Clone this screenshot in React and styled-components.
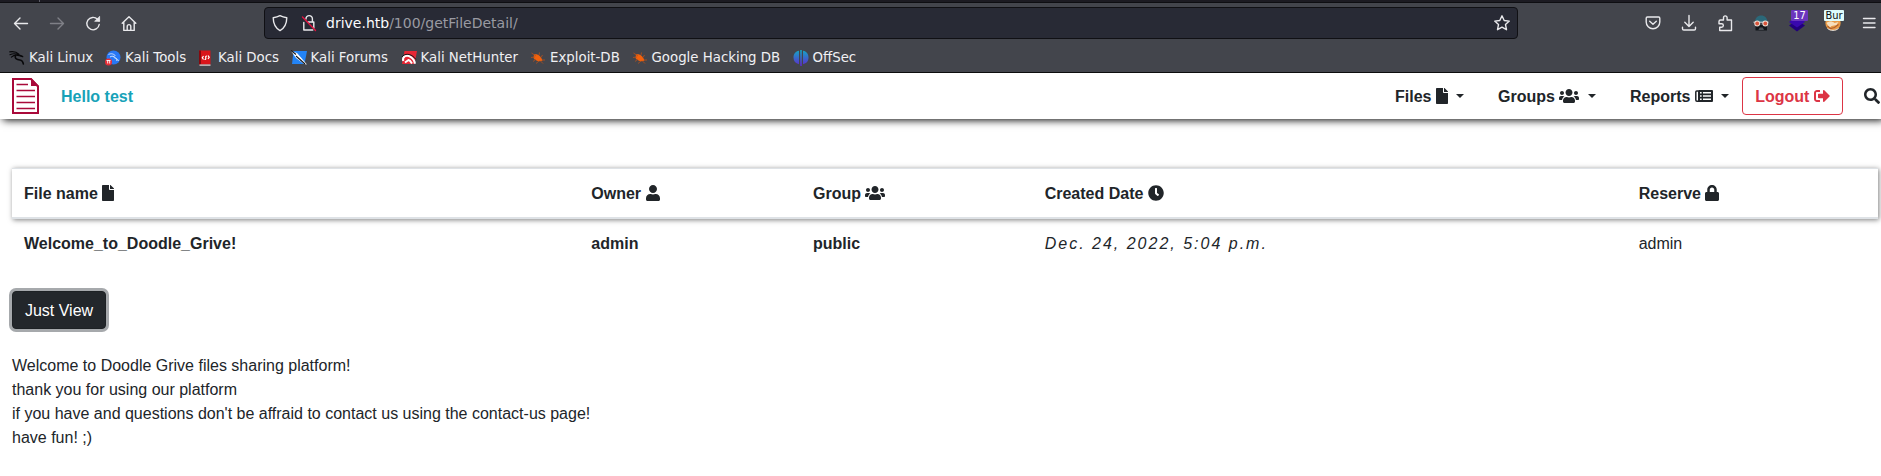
import React from 'react';
import styled, { createGlobalStyle } from 'styled-components';
import { FaFile, FaUsers, FaUser, FaClock, FaLock, FaSearch, FaSignOutAlt } from 'react-icons/fa';

const GlobalStyle = createGlobalStyle`
  *, *::before, *::after { box-sizing: border-box; }
  body {
    margin: 0;
    background: #fff;
    color: #212529;
    font: 400 16px/24px "Liberation Sans", Arial, sans-serif;
    overflow: hidden;
  }
  svg { display: block; flex: none; }
`;

const Page = styled.div`
  height: 476px;
  display: flex;
  flex-direction: column;
  overflow: hidden;
`;

/* ---------- browser chrome ---------- */
const Chrome = styled.header`
  position: relative;
  z-index: 1;
  flex: none;
  height: 73px;
  background: #43454c;
  color: #f0f0f3;
  border-bottom: 1px solid #0c0c0d;
  font-family: "DejaVu Sans", sans-serif;
`;
const TabStrip = styled.div`
  height: 3px;
  background: #1c1b22;
  border-bottom: 1px solid #0e0e12;
  padding-left: 39px;
`;
const TabEdge = styled.div`
  width: 1px;
  height: 2px;
  background: #5b5b66;
`;
const Toolbar = styled.div`
  height: 40px;
  display: flex;
  align-items: center;
`;
const NavButtons = styled.div`
  width: 264px;
  padding-left: 12px;
  display: flex;
  gap: 18px;
`;
const Stroke = styled.svg`
  width: 18px;
  height: 18px;
  fill: none;
  stroke: ${p => p.$color || '#e9e9ec'};
  stroke-width: 1.4;
  stroke-linecap: round;
  stroke-linejoin: round;
`;
const UrlBar = styled.div`
  width: 1254px;
  height: 32px;
  display: flex;
  align-items: center;
  padding: 0 6px;
  border: 1px solid #101014;
  border-radius: 4px;
  background: #282a35;
`;
const UrlIcons = styled.div`
  display: flex;
  gap: 10px;
`;
const Url = styled.div`
  flex: 1;
  padding-left: 9px;
  font-size: 14px;
  line-height: 20px;
  color: #9a9aa2;
`;
const Host = styled.span`
  color: #fbfbfe;
`;
const Extensions = styled.div`
  flex: 1;
  display: flex;
  align-items: center;
  gap: 18px;
  padding-left: 126px;
`;
const Extension = styled.div`
  position: relative;
  width: 18px;
  height: 18px;
`;
const Badge = styled.span`
  position: absolute;
  left: ${p => p.$left}px;
  top: -4px;
  width: ${p => p.$w}px;
  height: 11px;
  border-radius: 1px;
  background: ${p => p.$bg};
  color: ${p => p.$fg};
  font-family: "DejaVu Sans Condensed", "DejaVu Sans", sans-serif;
  font-stretch: condensed;
  font-size: 11px;
  line-height: 11px;
  text-align: center;
`;
const Bookmarks = styled.div`
  height: 29px;
  display: flex;
  align-items: center;
  padding: 1px 0 0 9px;
  font-size: 13.33px;
  line-height: 16px;
`;
const Bookmark = styled.div`
  width: ${p => p.$w}px;
  display: flex;
  align-items: center;
  gap: 4px;
  white-space: nowrap;
`;

/* ---------- site ---------- */
const Navbar = styled.nav`
  position: relative;
  flex: none;
  height: 46px;
  display: flex;
  align-items: center;
  padding-left: 12px;
  font-weight: 700;
  box-shadow: 3px 1px 8px #000;
  background: #fff;
`;
const Label = styled.span`
  padding-top: 2px;
`;
const Greeting = styled(Label)`
  flex: 1;
  padding-left: 22px;
  color: #17a2b8;
`;
const NavItem = styled.div`
  width: ${p => p.$w}px;
  display: flex;
  align-items: center;
  gap: 4.45px;
`;
const Caret = styled.i`
  border: 4.8px solid transparent;
  border-top-color: #212529;
  border-bottom: 0;
  margin-left: 4px;
`;
const Glyph = styled.span`
  display: inline-flex;
  svg { height: 16px; width: ${p => p.$w}px; }
`;
const Logout = styled.button`
  width: 101px;
  height: 38px;
  display: flex;
  align-items: center;
  justify-content: center;
  gap: 4.45px;
  padding: 0;
  border: 1px solid #dc3545;
  border-radius: 4px;
  background: #fff;
  color: #dc3545;
  font: inherit;
`;
const Search = styled.div`
  width: 38px;
  display: flex;
  padding-left: 21px;
`;

const Main = styled.main`
  padding: 49px 0 0 12px;
`;
const Row = styled.div`
  width: 1866px;
  display: grid;
  grid-template-columns: 567.3px 221.7px 231.7px 594px 1fr;
  padding-left: 12px;
  align-items: center;
`;
const HeadRow = styled(Row)`
  height: 51px;
  border-top: 1px solid #dee2e6;
  border-bottom: 2px solid #dee2e6;
  font-weight: 700;
  box-shadow: 1px 1px 5px rgba(0, 0, 0, .5);
`;
const BodyRow = styled(Row)`
  height: 50px;
`;
const HeadCell = styled.div`
  display: flex;
  align-items: center;
  gap: 4.45px;
`;
const DateText = styled.em`
  letter-spacing: 2px;
`;
const ViewButton = styled.button`
  display: block;
  width: 94px;
  height: 38px;
  margin: 22px 0 25px;
  padding: 2px 0 0;
  border: 1px solid #1d2124;
  border-radius: 4px;
  background: #23272b;
  color: #fff;
  font: inherit;
  box-shadow: 0 0 0 3px #a6a9ac;
`;
const Message = styled.div`
  white-space: pre-line;
`;

const BackIcon = () => <Stroke viewBox="0 0 18 18"><path d="M15.500 9.500H2.500M8 4 2.500 9.500 8 15" /></Stroke>;
const ForwardIcon = () => <Stroke $color="#7f8087" viewBox="0 0 18 18"><path d="M2.500 9.500h13M10 4 15.500 9.500 10 15" /></Stroke>;
const ReloadIcon = () => <Stroke viewBox="0 0 18 18"><path d="M15.200 10.500a6.200 6.200 0 1 1-1.700-5.200l1.600 1.700" /><path d="M15.600 2.700v4.600h-4.600z" fill="#e9e9ec" strokeWidth=".8" /></Stroke>;
const HomeIcon = () => <Stroke viewBox="0 0 18 18"><path d="m2.200 9.300 6.800-6.500 6.800 6.500M3.800 8v8.400h10.400V8M7.200 16.400v-4a1.800 1.800 0 0 1 3.600 0v4" /></Stroke>;
const ShieldIcon = () => <Stroke viewBox="0 0 18 18"><path d="M9 1.700c2 1.100 4 1.700 6.800 2-.1 5.600-1.600 10-6.800 12.900C3.800 13.700 2.300 9.300 2.200 3.700 5 3.400 7 2.800 9 1.700z" /></Stroke>;
const InsecureIcon = () => <Stroke viewBox="0 0 18 18"><path d="M7 5V4.800a3.200 3.200 0 0 1 6.400 0v3.200h1.400v6M4.800 8.500v7.500h9" /><path d="M9 8h4" /><path d="m3.500 3 13 13.500" stroke="#e2133f" /></Stroke>;
const StarIcon = () => <Stroke viewBox="0 0 18 18"><path d="m9 1.800 2.200 4.700 5.100.6-3.800 3.500 1 5.100L9 13.200l-4.500 2.500 1-5.100L1.700 7.100l5.100-.6z" /></Stroke>;
const PocketIcon = () => <Stroke viewBox="0 0 18 18"><path d="M3.400 3h11.200c.8 0 1.200.5 1.200 1.200V8a6.800 6.800 0 0 1-13.600 0V4.200C2.200 3.500 2.600 3 3.400 3zM5.700 7.300 9 10.300l3.300-3" /></Stroke>;
const DownloadIcon = () => <Stroke viewBox="0 0 18 18"><path d="M9 1.500v11M4.800 8.300 9 12.500l4.200-4.200M2.500 13.200v1.500c0 .8.500 1.300 1.300 1.300h10.400c.8 0 1.300-.5 1.300-1.300v-1.500" /></Stroke>;
const PuzzleIcon = () => <Stroke viewBox="0 0 18 18"><path d="M7.500 6V3.700a1.800 1.800 0 0 1 3.600 0V6h4.400v10.500H3.700v-3.200h1.900a1.700 1.700 0 0 0 0-3.500H3V7.500c0-1 .5-1.500 1.500-1.500z" /></Stroke>;
const MenuIcon = () => <Stroke viewBox="0 0 18 18"><path d="M3.500 4.500h11.500M3.500 9h11.500M3.500 13.500h11.500" /></Stroke>;

const GogglesIcon = () => (
  <svg width="18" height="18" viewBox="0 0 18 18">
    <path d="M3 8c0-4 2.500-6.500 6.200-6.500S15.300 4 15.300 8z" fill="#2b6879" />
    <path d="M3.500 11h11.500v5.500h-11.500z" fill="#111519" />
    <path d="M1.500 8.200h15" stroke="#ddd" strokeWidth="1" />
    <circle cx="5.200" cy="9.500" r="2.900" fill="#e8ded6" /><circle cx="13.300" cy="9.500" r="2.900" fill="#e8ded6" />
    <circle cx="5.200" cy="9.500" r="1.900" fill="#d9543a" /><circle cx="13.300" cy="9.500" r="1.900" fill="#d9543a" />
    <path d="M7.700 13.500h3l1.300 2.500h-5.600z" fill="#4a5057" />
  </svg>
);
const LayersIcon = () => (
  <svg width="18" height="18" viewBox="0 0 18 18">
    <path d="M1 11.500 9 6l8 5.500-8 6z" fill="#22007c" /><path d="M1 8 9 2l8 6-8 5.500z" fill="#3908ae" />
  </svg>
);
const FoxIcon = () => (
  <svg width="18" height="18" viewBox="0 0 18 18">
    <circle cx="9" cy="9" r="7.700" fill="#e99a45" />
    <path d="M2.500 9c2-2 6-2 8 0l4-1-2 3-5 1-2 2z" fill="#f6dfbd" />
    <path d="m3.500 12 3 2.500 4-1 4-3" stroke="#b0602a" strokeWidth="1.200" fill="none" />
    <path d="M3.500 14.500c3 2.500 8 2.500 11 0" stroke="#d8dce0" fill="none" />
  </svg>
);

const DragonIcon = () => (
  <svg width="16" height="16" viewBox="0 0 17 16" fill="none" stroke="#08080a" strokeLinecap="round">
    <path d="M.8 1.500C5 .8 8 1.500 10.500 4M1 4.500c3-1.500 6-1.300 9-.2M2.500 7C5 4.800 8 4.400 11 5.500l3 .7" strokeWidth="1.200" />
    <path d="M7 5c-1.500 4 2 4.700 4.500 5 2.500.5 3.500 2 3.800 4.500M11 5l3.500 1.500" strokeWidth="1.600" />
  </svg>
);
const ToolsIcon = () => (
  <svg width="16" height="16" viewBox="0 0 16 16">
    <circle cx="8.500" cy="7.500" r="7" fill="#2878f5" />
    <path d="M3.500 4.500c3-1.500 5.500-.5 7 1.500M5 7c3-2 6 0 7 4M8 6c1 3 4 1 5.500 5" fill="none" stroke="#cfe2ff" />
    <circle cx="3.500" cy="12" r="3.500" fill="#e72c36" />
    <path d="M1.500 10.500h4M2.700 10.500v3M4.700 10.500v3" stroke="#fff" strokeWidth=".9" />
  </svg>
);
const DocsIcon = () => (
  <svg width="16" height="16" viewBox="0 0 16 16">
    <path d="M1 .5h11.500v14H1z" fill="#d9141b" /><path d="M1 .5h2v14H1z" fill="#85090e" /><path d="M1.500 14.500h11v1.200h-11z" fill="#e5dada" />
    <path d="m5.500 6-1.200 1.700L5.500 9.500M10 5.500l1.200 1.800L10 9M9 6C6 6 9.500 9.500 6.500 9.500" stroke="#fff" strokeWidth="1.200" fill="none" />
  </svg>
);
const ForumsIcon = () => (
  <svg width="16" height="16" viewBox="0 0 16 16">
    <path d="M2.500 1H16l-2.500 13H1z" fill="#2384f6" /><path d="m0 1 6 2 10 11.500-3-.5L5 8z" fill="#fff" /><path d="m0 .5 5 4M5 6l9 8" stroke="#15171c" strokeWidth="1.100" />
  </svg>
);
const HunterIcon = () => (
  <svg width="16" height="16" viewBox="0 0 16 16">
    <path d="M3.500 1H16l-2.500 13H1z" fill="#e72735" />
    <path d="M2.200 11C1 6 6 4.500 9.500 6.800c2.800 1.800 4.300 4 4.300 7M4 12.500l3.500-2.500c2 .5 2.500 2 3.500 3.500" stroke="#fff" strokeWidth="2" fill="none" />
    <path d="M1 7C3 3.500 10 2.500 15 9.500" stroke="#15171c" strokeWidth="1" fill="none" />
  </svg>
);
const BugIcon = () => (
  <svg width="16" height="16" viewBox="0 0 16 16">
    <path d="M4 4.500c4-1 7 2 8.500 6-3 1.500-7.500.5-9-2.500z" fill="#f2610c" />
    <path d="M1.500 3 6 6M1 7.500 5 7M3 11.500l3-2.500M6 13.500l3-2.500M9.500 2.500 9 5M12.500 5 11 7.500M15 10h-3M13 13.500l-3-3" stroke="#b6511b" strokeWidth=".8" />
  </svg>
);
const OffSecIcon = () => (
  <svg width="16" height="16" viewBox="0 0 16 16">
    <defs><linearGradient id="offsec" x1="0" y1="0" x2="0" y2="1"><stop stopColor="#13a9c4" /><stop offset="1" stopColor="#5f27cf" /></linearGradient></defs>
    <path d="M6 .7v13.500C2.500 13.500.5 11 .5 7.500S2.500 1.300 6 .7zM10 .7v13.500c3.500-.7 5.500-3.200 5.500-6.700S13.500 1.300 10 .7zM7.200 0h1.600v16H7.200z" fill="url(#offsec)" />
  </svg>
);
const ReportIcon = () => (
  <svg viewBox="0 0 18 16" fill="none" stroke="#212529" strokeLinejoin="round">
    <path d="M3.200 3H1.800c-.6 0-1 .4-1 1v8c0 .8.500 1.200 1.200 1.200h2" strokeWidth="1.500" />
    <path d="M4 3h13v10H4z" strokeWidth="2" />
    <path d="M5 6.300h11.500M5 9.700h11.500" strokeWidth="1.700" />
    <path d="M7.300 3v10" strokeWidth="1.300" />
  </svg>
);
const SiteLogo = () => (
  <svg width="27" height="36" viewBox="0 0 27 36">
    <path d="M1 1H19l7 7.500V35H1z" fill="#fff" stroke="#a90a3a" strokeWidth="2" />
    <path d="M19 0v8h8z" fill="#a90a3a" />
    <path d="M4.500 6.500H16M4.500 12.500h18.500M4.500 18.500h18.500M4.500 24.500h18.500M4.500 30.500h18.500" stroke="#a90a3a" strokeWidth="1.700" />
  </svg>
);

const bookmarks = [
  ['Kali Linux', DragonIcon, 96],
  ['Kali Tools', ToolsIcon, 93],
  ['Kali Docs', DocsIcon, 92.5],
  ['Kali Forums', ForumsIcon, 110],
  ['Kali NetHunter', HunterIcon, 129.5],
  ['Exploit-DB', BugIcon, 101.5],
  ['Google Hacking DB', BugIcon, 161],
  ['OffSec', OffSecIcon, 80],
];

export default function App() {
  return (
    <Page>
      <GlobalStyle />
      <Chrome>
        <TabStrip><TabEdge /></TabStrip>
        <Toolbar>
          <NavButtons><BackIcon /><ForwardIcon /><ReloadIcon /><HomeIcon /></NavButtons>
          <UrlBar>
            <UrlIcons><ShieldIcon /><InsecureIcon /></UrlIcons>
            <Url><Host>drive.htb</Host>/100/getFileDetail/</Url>
            <StarIcon />
          </UrlBar>
          <Extensions>
            <PocketIcon /><DownloadIcon /><PuzzleIcon /><GogglesIcon />
            <Extension><LayersIcon /><Badge $left={3} $w={17} $bg="#6b35bd" $fg="#fff">17</Badge></Extension>
            <Extension><FoxIcon /><Badge $left={0} $w={20} $bg="#defcfc" $fg="#111">Bur</Badge></Extension>
            <MenuIcon />
          </Extensions>
        </Toolbar>
        <Bookmarks>
          {bookmarks.map(([label, Icon, w]) => (
            <Bookmark key={label} $w={w}><Icon />{label}</Bookmark>
          ))}
        </Bookmarks>
      </Chrome>

      <Navbar>
        <SiteLogo />
        <Greeting>Hello test</Greeting>
        <NavItem $w={103}><Label>Files</Label><Glyph $w={12}><FaFile /></Glyph><Caret /></NavItem>
        <NavItem $w={132}><Label>Groups</Label><Glyph $w={20}><FaUsers /></Glyph><Caret /></NavItem>
        <NavItem $w={112}><Label>Reports</Label><Glyph $w={18}><ReportIcon /></Glyph><Caret /></NavItem>
        <Logout><Label>Logout</Label><Glyph $w={16}><FaSignOutAlt /></Glyph></Logout>
        <Search><Glyph $w={16}><FaSearch /></Glyph></Search>
      </Navbar>

      <Main>
        <HeadRow>
          <HeadCell><Label>File name</Label><Glyph $w={12}><FaFile /></Glyph></HeadCell>
          <HeadCell><Label>Owner</Label><Glyph $w={14}><FaUser /></Glyph></HeadCell>
          <HeadCell><Label>Group</Label><Glyph $w={20}><FaUsers /></Glyph></HeadCell>
          <HeadCell><Label>Created Date</Label><Glyph $w={16}><FaClock /></Glyph></HeadCell>
          <HeadCell><Label>Reserve</Label><Glyph $w={14}><FaLock /></Glyph></HeadCell>
        </HeadRow>
        <BodyRow>
          <strong>Welcome_to_Doodle_Grive!</strong>
          <strong>admin</strong>
          <strong>public</strong>
          <DateText>Dec. 24, 2022, 5:04 p.m.</DateText>
          <span>admin</span>
        </BodyRow>
        <ViewButton>Just View</ViewButton>
        <Message>{`Welcome to Doodle Grive files sharing platform!
thank you for using our platform
if you have and questions don't be affraid to contact us using the contact-us page!
have fun! ;)`}</Message>
      </Main>
    </Page>
  );
}
